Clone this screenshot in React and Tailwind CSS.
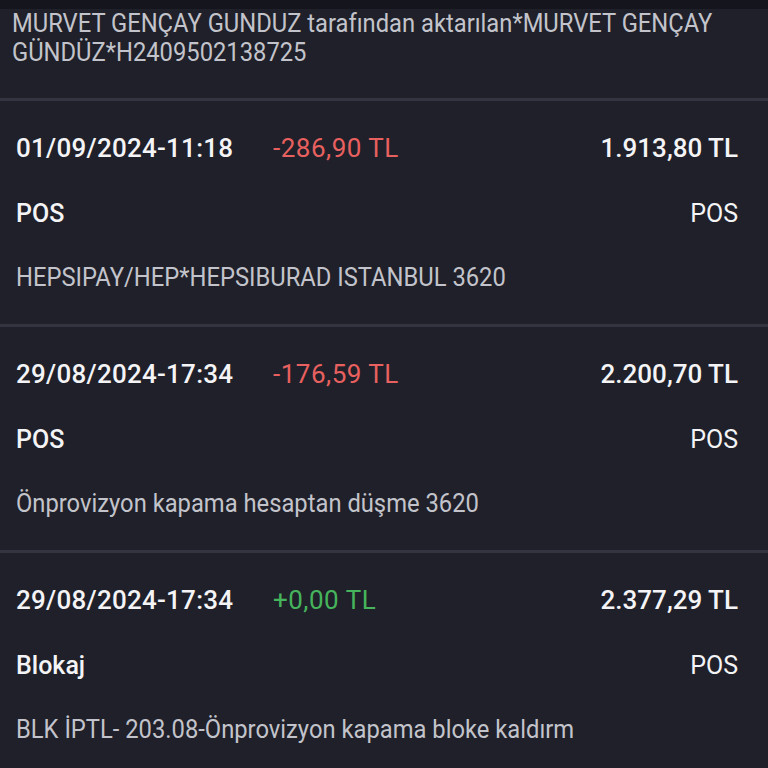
import React from 'react';

const rows = [
  {
    date: '01/09/2024-11:18',
    amount: '-286,90 TL',
    positive: false,
    balance: '1.913,80 TL',
    type: 'POS',
    channel: 'POS',
    desc: 'HEPSIPAY/HEP*HEPSIBURAD ISTANBUL 3620',
  },
  {
    date: '29/08/2024-17:34',
    amount: '-176,59 TL',
    positive: false,
    balance: '2.200,70 TL',
    type: 'POS',
    channel: 'POS',
    desc: 'Önprovizyon kapama hesaptan düşme 3620',
  },
  {
    date: '29/08/2024-17:34',
    amount: '+0,00 TL',
    positive: true,
    balance: '2.377,29 TL',
    type: 'Blokaj',
    channel: 'POS',
    desc: 'BLK İPTL- 203.08-Önprovizyon kapama bloke kaldırm',
  },
];

const TxRow = ({ tx }) => (
  <div className="border-t-[3px] border-[#33343f] pl-4 pr-[30px] pt-[29px] pb-[29px]">
    <div className="flex items-center h-[36px] text-[26px]">
      <span className="w-[257px] font-medium tracking-[0.25px] text-[#f4f4f6]">{tx.date}</span>
      <span className={`tracking-[0.5px] ${tx.positive ? 'text-[#46b45c]' : 'text-[#e8605f]'}`}>{tx.amount}</span>
      <span className="ml-auto font-medium text-[#f4f4f6]">{tx.balance}</span>
    </div>
    <div className="flex items-center justify-between h-[36px] mt-[29px]">
      <span className="font-medium text-[#f4f4f6]">{tx.type}</span>
      <span className="text-[#f4f4f6]">{tx.channel}</span>
    </div>
    <div className="flex items-center h-[36px] mt-[28px]">
      <span className="whitespace-nowrap origin-left scale-x-[0.95] text-[#c3c4cb]">{tx.desc}</span>
    </div>
  </div>
);

export default function App() {
  return (
    <div
      className="w-[768px] h-[768px] overflow-hidden bg-[#1f2029] text-[25px] leading-[29px]"
      style={{ fontFamily: 'Roboto, "Noto Sans", sans-serif' }}
    >
      <div className="h-[9px] bg-[#15151d]" />
      <div className="pl-[12px] h-[89px] text-[#c3c4cb]">
        <div className="whitespace-nowrap origin-left scale-x-[0.95]">
          MURVET GENÇAY GUNDUZ tarafından aktarılan*MURVET GENÇAY
          <br />
          GÜNDÜZ*H2409502138725
        </div>
      </div>
      {rows.map((tx, i) => (
        <TxRow key={i} tx={tx} />
      ))}
    </div>
  );
}
